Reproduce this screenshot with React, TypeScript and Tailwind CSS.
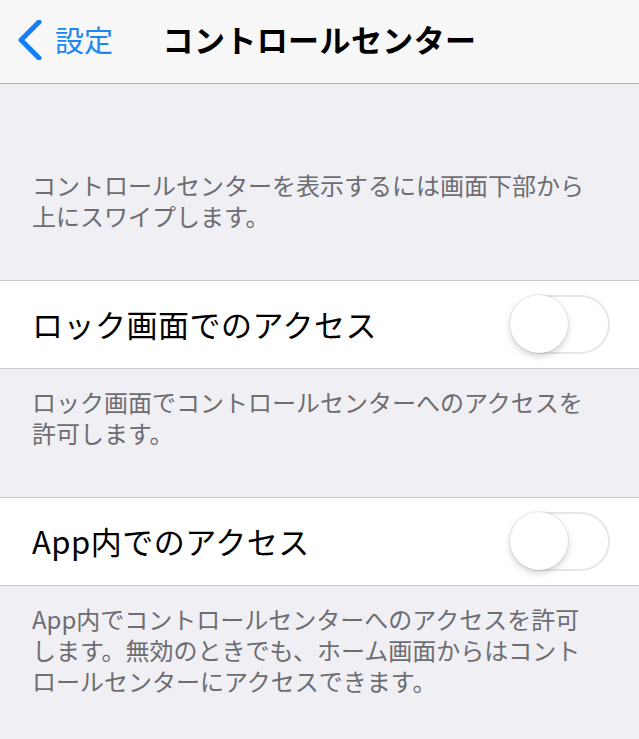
import React from "react";

const font = { fontFamily: '"Noto Sans CJK JP", "Noto Sans", sans-serif' };

function Toggle() {
  return (
    <div className="relative w-[99px] h-[59px] rounded-full border-2 border-[#e6e6e9] bg-white shrink-0">
      <div className="absolute left-[-3px] top-[-2px] w-[58px] h-[58px] rounded-full bg-white shadow-[0_3px_7px_rgba(0,0,0,0.18),0_0_0_1px_rgba(0,0,0,0.06)]" />
    </div>
  );
}

function Row({ label }: { label: string }) {
  return (
    <div className="h-[89px] bg-white border-y border-[#c8c7cc] flex items-center justify-between pl-[32px] pr-[29px]">
      <span className="text-[31px] leading-none text-black tracking-[0.5px] mt-[-3px]">{label}</span>
      <Toggle />
    </div>
  );
}

function Footer({ lines, pt }: { lines: string[]; pt: string }) {
  return (
    <div className={`${pt} pb-[49px] px-[32px] text-[24px] leading-[31px] text-[#6d6d72] whitespace-nowrap`}>
      <p>
        {lines.map((l, i) => (
          <React.Fragment key={i}>
            {i > 0 && <br />}
            {l}
          </React.Fragment>
        ))}
      </p>
    </div>
  );
}

export default function App() {
  return (
    <div style={font} className="w-[639px] h-[739px] bg-[#efeff4] overflow-hidden">
      <div className="h-[84px] bg-[#f7f7f8] border-b border-[#b2b2b2] grid grid-cols-[1fr_auto_1fr] items-center">
        <div className="flex items-center pl-[17px] mt-[-4px]">
          <svg width="26" height="40" viewBox="0 0 26 40">
            <path d="M22 2 L4 20 L22 38" fill="none" stroke="#157efb" strokeWidth="5" strokeLinecap="round" strokeLinejoin="round" />
          </svg>
          <span className="ml-[12px] text-[29px] leading-none text-[#1f85f0]">設定</span>
        </div>
        <div className="text-[31px] font-bold leading-none text-black mt-[-6px] tracking-[0.4px]">コントロールセンター</div>
        <div />
      </div>
      <Footer
        pt="pt-[85px]"
        lines={["コントロールセンターを表示するには画面下部から", "上にスワイプします。"]}
      />
      <Row label="ロック画面でのアクセス" />
      <Footer
        pt="pt-[17px]"
        lines={["ロック画面でコントロールセンターへのアクセスを", "許可します。"]}
      />
      <Row label="App内でのアクセス" />
      <Footer
        pt="pt-[17px]"
        lines={[
          "App内でコントロールセンターへのアクセスを許可",
          "します。無効のときでも、ホーム画面からはコント",
          "ロールセンターにアクセスできます。",
        ]}
      />
    </div>
  );
}
